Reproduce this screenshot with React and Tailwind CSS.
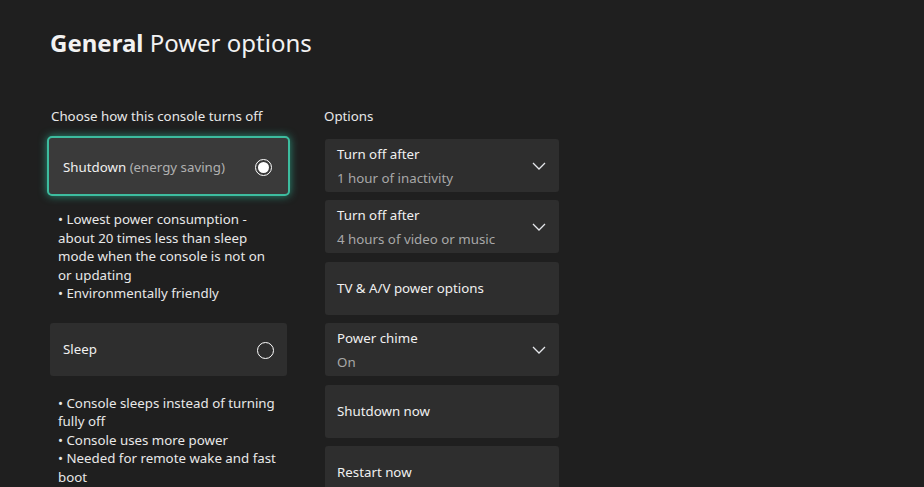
import React from "react";

function Chevron() {
  return (
    <svg width="16" height="16" viewBox="0 0 16 16" className="text-gray-200">
      <path d="M2 5 L8 11 L14 5" fill="none" stroke="currentColor" strokeWidth="1.3" />
    </svg>
  );
}

function OptionCard({ title, value, chevron }) {
  return (
    <div className="h-[53px] bg-[#2e2e2e] rounded-[3px] flex items-center pl-3 pr-[12px]">
      <div className="flex-1 flex flex-col">
        <span className="text-[13.3px] text-[#f0f0f0] leading-[18px]">{title}</span>
        {value && <span className="text-[13.3px] text-[#a8a8a8] leading-[18px] mt-[6px]">{value}</span>}
      </div>
      {chevron && <Chevron />}
    </div>
  );
}

export default function App() {
  return (
    <div
      className="w-[924px] h-[487px] bg-[#1f1f1f] overflow-hidden text-white"
      style={{ fontFamily: '"Noto Sans", "Open Sans", sans-serif' }}
    >
      <div className="pl-[50px] pt-[27px] h-[103px]">
        <h1 className="text-[24px] leading-[32px] text-[#f2f2f2]">
          <span className="font-bold">General</span> Power options
        </h1>
      </div>
      <div className="flex pl-[50px] gap-[38px]">
        <div className="w-[237px] flex flex-col">
          <p className="text-[13.3px] leading-[26px] text-[#e8e8e8] pl-[1px]">Choose how this console turns off</p>
          <div className="mt-[7px] -mx-[3px] p-[2px] rounded-[5px] border-[2px] border-[#3dbc9f] shadow-[0_0_8px_#2a8f78] bg-[#3a3a3a]">
            <div className="h-[52px] flex items-center pl-[12px] pr-[14px] pt-[3px]">
              <span className="flex-1 text-[13.3px] text-[#f0f0f0]">
                Shutdown <span className="text-[#b0b0b0]">(energy saving)</span>
              </span>
              <span className="w-[17px] h-[17px] rounded-full border-[1.5px] border-white flex items-center justify-center">
                <span className="w-[11px] h-[11px] rounded-full bg-white"></span>
              </span>
            </div>
          </div>
          <div className="mt-[14px] pl-[8px] pr-[7px] text-[13.3px] leading-[18.5px] text-[#e8e8e8]">
            <p>• Lowest power consumption - about 20 times less than sleep mode when the console is not on or updating</p>
            <p>• Environmentally friendly</p>
          </div>
          <div className="mt-[20px] h-[53px] bg-[#2e2e2e] rounded-[3px] flex items-center pl-[13px] pr-[13px] pt-[2px]">
            <span className="flex-1 text-[13.3px] text-[#f0f0f0]">Sleep</span>
            <span className="w-[17px] h-[17px] rounded-full border-[1.5px] border-white"></span>
          </div>
          <div className="mt-[18px] pl-[8px] pr-[7px] text-[13.3px] leading-[18.5px] text-[#e8e8e8]">
            <p>• Console sleeps instead of turning fully off</p>
            <p>• Console uses more power</p>
            <p>• Needed for remote wake and fast boot</p>
          </div>
        </div>
        <div className="w-[234px] flex flex-col">
          <p className="text-[13.3px] leading-[26px] text-[#e8e8e8] -ml-[1px]">Options</p>
          <div className="mt-[10px] flex flex-col gap-[8.4px]">
            <OptionCard title="Turn off after" value="1 hour of inactivity" chevron />
            <OptionCard title="Turn off after" value="4 hours of video or music" chevron />
            <OptionCard title="TV & A/V power options" />
            <OptionCard title="Power chime" value="On" chevron />
            <OptionCard title="Shutdown now" />
            <OptionCard title="Restart now" />
          </div>
        </div>
      </div>
    </div>
  );
}
